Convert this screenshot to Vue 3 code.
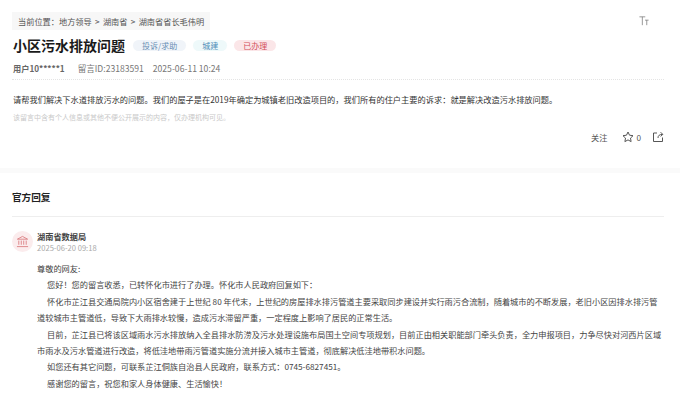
<script setup>
const crumbs = '当前位置：地方领导 > 湖南省 > 湖南省省长毛伟明'
const paragraphs = [
  { text: '尊敬的网友:', flush: true },
  { text: '您好！您的留言收悉，已转怀化市进行了办理。怀化市人民政府回复如下：' },
  { text: '怀化市芷江县交通局院内小区宿舍建于上世纪 80 年代末，上世纪的房屋排水排污管道主要采取同步建设并实行雨污合流制，随着城市的不断发展，老旧小区因排水排污管道较城市主管道低，导致下大雨排水较慢，造成污水滞留严重，一定程度上影响了居民的正常生活。' },
  { text: '目前，芷江县已将该区域雨水污水排放纳入全县排水防涝及污水处理设施布局国土空间专项规划，目前正由相关职能部门牵头负责，全力申报项目，力争尽快对河西片区域市雨水及污水管道进行改造，将低洼地带雨污管道实施分流并接入城市主管道，彻底解决低洼地带积水问题。' },
  { text: '如您还有其它问题，可联系芷江侗族自治县人民政府，联系方式：0745-6827451。' },
  { text: '感谢您的留言，祝您和家人身体健康、生活愉快！' },
]
</script>

<template>
  <main class="page">
    <section class="message">
      <div class="top-row">
        <div class="crumbs">{{ crumbs }}</div>
        <svg class="font-size" viewBox="0 0 12 12" width="10" height="10" fill="none" stroke="#777" stroke-width="0.9">
          <path d="M0.5 1H7.5M4 1V11M7.2 5H11.5M9.3 5V11" />
        </svg>
      </div>
      <div class="title-row">
        <h1>小区污水排放问题</h1>
        <span class="tag tag-blue">投诉/求助</span>
        <span class="tag tag-cyan">城建</span>
        <span class="tag tag-red">已办理</span>
      </div>
      <div class="meta">
        <strong>用户10*****1</strong>
        <span>留言ID:23183591</span>
        <span>2025-06-11 10:24</span>
      </div>
      <p class="body-text">请帮我们解决下水道排放污水的问题。我们的屋子是在2019年确定为城镇老旧改造项目的，我们所有的住户主要的诉求：就是解决改造污水排放问题。</p>
      <div class="notice-row">
        <p class="notice">该留言中含有个人信息或其他不便公开展示的内容，仅办理机构可见。</p>
        <div class="actions">
          <span>关注</span>
          <span class="star">
            <svg viewBox="0 0 12 12" width="12" height="12" fill="none" stroke="#444" stroke-width="0.9" stroke-linejoin="round">
              <path d="M6 1L7.5 4.2L11 4.7L8.5 7.1L9.1 10.6L6 8.9L2.9 10.6L3.5 7.1L1 4.7L4.5 4.2Z" />
            </svg>
            0
          </span>
          <svg viewBox="0 0 12 12" width="12" height="12" fill="none" stroke="#444" stroke-width="0.9">
            <path d="M5 2H1.5V10.5H10.5V6.5M6 7C6 4.5 7.5 3.4 10.5 3.4M8.6 1.2L10.8 3.4L8.6 5.4" />
          </svg>
        </div>
      </div>
    </section>

    <section class="reply">
      <h2>官方回复</h2>
      <div class="org">
        <div class="avatar">
          <svg viewBox="0 0 14 14" width="13" height="13" fill="none" stroke="#d9777b" stroke-width="0.9">
            <path d="M1.5 4.5L7 1.5L12.5 4.5ZM3 6V10.5M5.7 6V10.5M8.3 6V10.5M11 6V10.5M1 12.5H13" />
          </svg>
        </div>
        <div class="org-info">
          <div class="org-name">湖南省数据局</div>
          <div class="org-date">2025-06-20 09:18</div>
        </div>
      </div>
      <div class="answer">
        <p v-for="p in paragraphs" :key="p.text" :class="{ indent: !p.flush }">{{ p.text }}</p>
      </div>
    </section>
  </main>
</template>

<style>
body { background: #fff; }
</style>

<style scoped>
.page {
  width: 680px;
  height: 406px;
  overflow: hidden;
  box-sizing: border-box;
  padding-top: 12px;
  font-family: "Noto Sans CJK SC", "Liberation Sans", sans-serif;
  color: #333;
  background: #fff;
}
.message { padding: 0 16px 25px 12px; }
.top-row { display: flex; justify-content: space-between; align-items: center; padding-right: 15px; }
.crumbs {
  height: 18px;
  line-height: 18px;
  padding: 0 6px;
  background: #f7f7f7;
  font-size: 8.2px;
  word-spacing: 1.5px;
  color: #555;
}
.title-row { display: flex; align-items: center; height: 26px; margin-top: 2px; }
h1 { margin: 0 8px 0 1px; font-size: 14px; line-height: 26px; font-weight: 700; color: #1a1a1a; }
.tag {
  height: 11px;
  line-height: 11px;
  padding: 0 9px;
  margin-right: 7px;
  border-radius: 6px;
  font-size: 8px;
}
.tag-blue { background: #f0f4f9; color: #6a8fb5; }
.tag-cyan { background: #eef9fa; color: #4f8db8; }
.tag-red { background: #fbe6e8; color: #d2505a; }
.meta {
  display: flex;
  gap: 9px;
  height: 21px;
  line-height: 21px;
  padding-left: 1px;
  font-size: 8.6px;
  color: #777;
  border-bottom: 1px dotted #e4e4e4;
}
.meta strong { font-weight: 700; color: #666; font-size: 8.2px; margin-right: 4px; }
.body-text { margin: 11px 0 0 1px; font-size: 8.22px; line-height: 16px; color: #333; }
.notice-row { display: flex; justify-content: space-between; align-items: flex-start; }
.notice { margin: 0 0 0 1px; font-size: 7px; line-height: 20px; color: #c9c9c9; }
.actions { display: flex; align-items: center; gap: 11px; margin-top: 24px; font-size: 8.2px; color: #555; }
.actions > span:first-child { margin-right: 4px; }
.star { display: flex; align-items: center; gap: 2px; }
.reply { padding: 16px 16px 0 12px; border-top: 5px solid #fafafa; }
h2 { margin: 0; font-size: 9.6px; line-height: 16px; font-weight: 700; color: #222; padding-bottom: 11px; border-bottom: 1px solid #eee; }
.org { display: flex; gap: 4px; margin-top: 14px; }
.avatar { width: 21px; height: 21px; border-radius: 50%; background: #fbeced; display: flex; align-items: center; justify-content: center; }
.org-name { font-size: 8.2px; line-height: 10px; font-weight: 700; color: #444; }
.org-date { font-size: 7.6px; line-height: 14px; color: #aaa; }
.answer { padding-left: 25px; margin-top: 5px; font-size: 8.2px; line-height: 16.4px; color: #444; }
.answer p { margin: 0; }
.answer .indent { text-indent: 10px; }
</style>
